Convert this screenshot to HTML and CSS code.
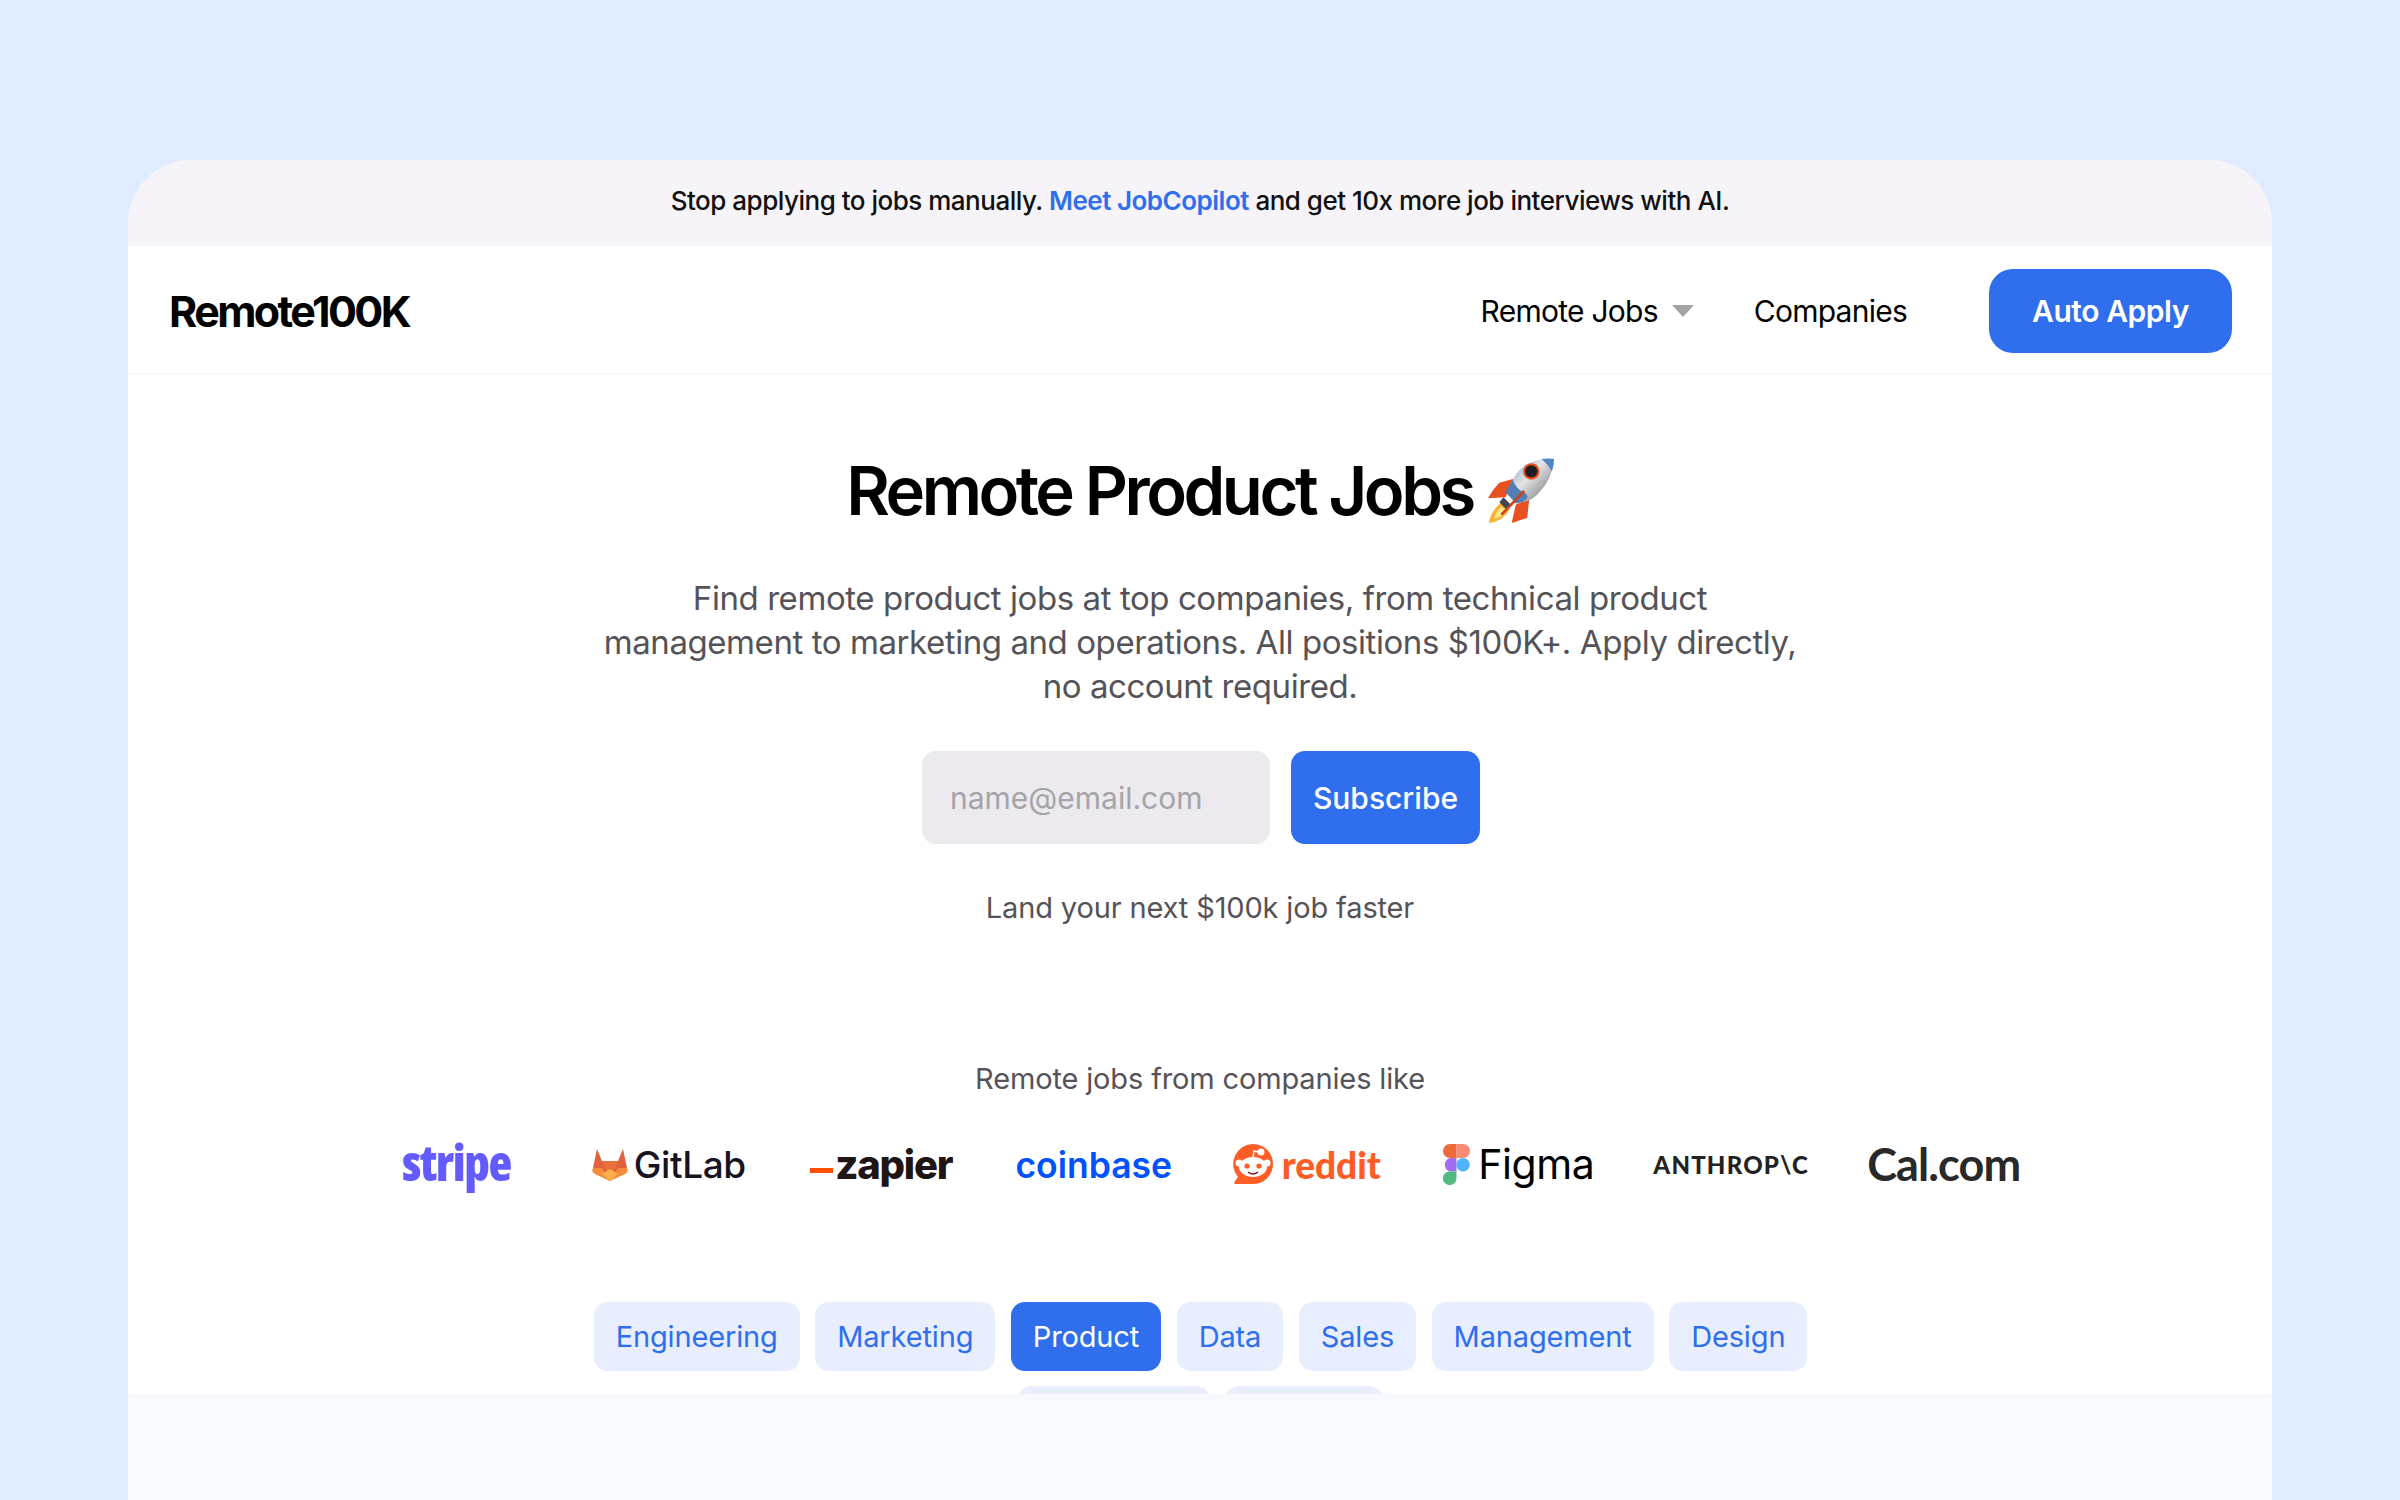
FILE: index.html
```html
<!DOCTYPE html>
<html lang="en">
<head>
    <meta charset="UTF-8">
    <title>Remote Product Jobs</title>
    <link rel="stylesheet" href="styles.css">
</head>
<body>
    <div class="card">
        <div class="banner">Stop applying to jobs manually. <a href="#">Meet JobCopilot</a> and get 10x more job interviews with AI.</div>

        <nav class="nav">
            <a class="brand" href="#">Remote100K</a>
            <div class="nav-links">
                <a class="nav-link" href="#">Remote Jobs <span class="caret"></span></a>
                <a class="nav-link" href="#">Companies</a>
                <a class="auto-apply" href="#">Auto Apply</a>
            </div>
        </nav>

        <main class="hero">
            <h1>Remote Product Jobs
                <svg class="rocket" viewBox="0 0 64 64" aria-hidden="true">
                    <defs>
                        <linearGradient id="hull" x1="0" y1="0" x2="1" y2="1">
                            <stop offset="0" stop-color="#7fa6cf"/>
                            <stop offset="0.4" stop-color="#e4e4e4"/>
                            <stop offset="0.75" stop-color="#9a9b9e"/>
                            <stop offset="1" stop-color="#6f7175"/>
                        </linearGradient>
                    </defs>
                    <path d="M25 20 L11 24 Q4 31 0 39 L17 38Z" fill="#e9501f"/>
                    <path d="M40 40 L38 58 L23 63 L27 45Z" fill="#e9501f"/>
                    <path d="M14 42 Q2 52 1 63 Q14 62 21 50Z" fill="#f9b233"/>
                    <path d="M13 47 Q7 53 6 59 Q13 58 18 51Z" fill="#fde68a"/>
                    <path d="M15 38 L22 45 L18 50 L11 43Z" fill="#3f4654"/>
                    <path d="M64 1 Q48 -1 35 8 Q28 13 24 21 L33 43 Q44 41 50 33 Q63 19 64 1Z" fill="url(#hull)"/>
                    <path d="M64 1 Q58 0 52 1 Q58 6 62 13 Q64 7 64 1Z" fill="#4f86c6"/>
                    <path d="M24 21 L17 33 L27 44 L33 43 Q42 38 36 34 Q27 30 24 21Z" fill="#4f7fb4"/>
                    <path d="M35 32 L13 55" stroke="#c8431c" stroke-width="2.500" fill="none"/>
                    <circle cx="42" cy="13" r="8" fill="#e9501f"/>
                    <circle cx="42" cy="13" r="6" fill="#1d1d22"/>
                </svg>
            </h1>
            <p class="lead">Find remote product jobs at top companies, from technical product management to marketing and operations. All positions $100K+. Apply directly, no account required.</p>

            <form class="subscribe">
                <input type="email" placeholder="name@email.com">
                <button type="button">Subscribe</button>
            </form>
            <p class="tagline">Land your next $100k job faster</p>

            <p class="logos-title">Remote jobs from companies like</p>
            <div class="logos">
                <div class="logo"><span class="stripe">stripe</span></div>
                <div class="logo">
                    <svg class="mark-gitlab" viewBox="0 0 36 33" aria-hidden="true">
                        <path d="M18 33 L1 20 L5 1 L10 13 H26 L31 1 L35 20Z" fill="#e2603a"/>
                        <path d="M18 33 L10 13 H26Z" fill="#e8703a"/>
                        <path d="M1 20 Q-1 24 3 26 L18 33 L10 20Z" fill="#f58a3c"/>
                        <path d="M35 20 Q37 24 33 26 L18 33 L26 20Z" fill="#f58a3c"/>
                        <path d="M18 33 L10 26 L18 21 L26 26Z" fill="#fbb04a"/>
                    </svg>
                    <span class="gitlab">GitLab</span>
                </div>
                <div class="logo"><span class="zapier-bar"></span><span class="zapier">zapier</span></div>
                <div class="logo"><span class="coinbase">coinbase</span></div>
                <div class="logo">
                    <svg class="mark-reddit" viewBox="0 0 42 42" aria-hidden="true">
                        <path d="M21 1 A20 20 0 1 1 21 41 H4 Q1 41 3 38 L6 34 A20 20 0 0 1 21 1Z" fill="#ff5c26"/>
                        <ellipse cx="21" cy="24" rx="14" ry="10" fill="#fff"/>
                        <circle cx="7" cy="20" r="3.5" fill="#fff"/>
                        <circle cx="35" cy="20" r="3.5" fill="#fff"/>
                        <circle cx="29" cy="9" r="3.5" fill="#fff"/>
                        <path d="M21 15 L22 8 L27 9" fill="none" stroke="#fff" stroke-width="1.5"/>
                        <circle cx="15" cy="23" r="2.6" fill="#ff5c26"/>
                        <circle cx="27" cy="23" r="2.6" fill="#ff5c26"/>
                        <path d="M16 29 Q21 33 26 29" fill="none" stroke="#842123" stroke-width="1.6"/>
                    </svg>
                    <span class="reddit">reddit</span>
                </div>
                <div class="logo">
                    <svg class="mark-figma" viewBox="0 0 27 41" aria-hidden="true">
                        <path d="M13.5 0 H7 A7 7 0 0 0 7 14 H13.5Z" fill="#ee6a3a"/>
                        <path d="M13.5 0 H20 A7 7 0 0 1 20 14 H13.5Z" fill="#fb8a72"/>
                        <path d="M13.5 14 H7 A7 7 0 0 0 7 27.500 H13.5Z" fill="#a46cf5"/>
                        <circle cx="20" cy="20.700" r="6.800" fill="#4fb4fb"/>
                        <path d="M7 27.500 H13.500 V34 A6.800 6.800 0 1 1 7 27.500Z" fill="#4fbb83"/>
                    </svg>
                    <span class="figma">Figma</span>
                </div>
                <div class="logo"><span class="anthropic">ANTHROP\C</span></div>
                <div class="logo"><span class="calcom">Cal.com</span></div>
            </div>

            <div class="tags">
                <a class="tag" href="#">Engineering</a>
                <a class="tag" href="#">Marketing</a>
                <a class="tag active" href="#">Product</a>
                <a class="tag" href="#">Data</a>
                <a class="tag" href="#">Sales</a>
                <a class="tag" href="#">Management</a>
                <a class="tag" href="#">Design</a>
                <span class="tag tag-long"></span>
                <span class="tag tag-short"></span>
            </div>
        </main>

        <div class="lower"></div>
    </div>
</body>
</html>
```

FILE: styles.css
```css
* {
    box-sizing: border-box;
}
html, body {
    height: 100%;
}
body {
    margin: 0;
    padding: 160px 128px 0;
    background-color: #dfebff;
    font-family: Inter, "Liberation Sans", sans-serif;
    color: #000;
    overflow: hidden;
}
a {
    text-decoration: none;
    color: inherit;
}
.card {
    height: 1340px;
    background-color: #fff;
    border-radius: 64px 64px 0 0;
    overflow: hidden;
    display: flex;
    flex-direction: column;
}
.banner {
    height: 86px;
    padding-bottom: 6px;
    display: flex;
    align-items: center;
    justify-content: center;
    white-space: pre-wrap;
    background-color: #f6f4f8;
    font-size: 26px;
    font-weight: 500;
    letter-spacing: -0.019em;
    color: #111;
}
.banner a {
    color: #2f6fed;
    font-weight: 600;
}
.nav {
    height: 129px;
    padding: 2px 40px 0 41px;
    display: flex;
    align-items: center;
    justify-content: space-between;
    border-bottom: 2px solid #f6f5f8;
}
.brand {
    font-size: 43px;
    font-weight: 700;
    letter-spacing: -0.06em;
}
.nav-links {
    display: flex;
    align-items: center;
}
.nav-link {
    font-size: 30px;
    font-weight: 400;
    letter-spacing: -0.025em;
    display: flex;
    align-items: center;
    gap: 14px;
    margin-right: 60px;
}
.nav-link + .nav-link {
    margin-right: 82px;
}
.caret {
    width: 0;
    height: 0;
    border-left: 11px solid transparent;
    border-right: 11px solid transparent;
    border-top: 12px solid #a3a3a3;
}
.auto-apply {
    width: 243px;
    height: 84px;
    display: flex;
    align-items: center;
    justify-content: center;
    background-color: #2f6fed;
    color: #fff;
    border-radius: 24px;
    font-size: 30px;
    font-weight: 600;
    letter-spacing: -0.015em;
}
.hero {
    height: 1019px;
    flex: none;
    overflow: hidden;
    padding-top: 66px;
    text-align: center;
}
h1 {
    margin: 0;
    height: 100px;
    font-size: 67px;
    line-height: 100px;
    font-weight: 600;
    letter-spacing: -0.052em;
    display: flex;
    justify-content: center;
    align-items: center;
    gap: 15px;
}
.rocket {
    width: 66px;
    height: 66px;
}
.lead {
    width: 1200px;
    margin: 35px auto 0;
    font-size: 33px;
    line-height: 44px;
    letter-spacing: -0.013em;
    color: #555358;
}
.subscribe {
    display: flex;
    justify-content: center;
    gap: 21px;
    margin: 43px 0 0 2px;
}
.subscribe input {
    width: 348px;
    height: 93px;
    padding: 0 28px;
    border: none;
    border-radius: 14px;
    background-color: #eceaee;
    font-family: inherit;
    font-size: 30px;
}
.subscribe input::placeholder {
    color: #a5a3a8;
}
.subscribe button {
    width: 189px;
    height: 93px;
    border: none;
    border-radius: 14px;
    background-color: #2f6fed;
    color: #fff;
    font-family: inherit;
    font-size: 30px;
    font-weight: 500;
}
.tagline {
    margin: 46px 0 0;
    font-size: 29px;
    line-height: 36px;
    letter-spacing: -0.005em;
    color: #555358;
}
.logos-title {
    margin: 135px 0 0;
    font-size: 29px;
    line-height: 36px;
    letter-spacing: -0.005em;
    color: #555358;
}
.logos {
    width: 1700px;
    height: 70px;
    margin: 32px auto 0;
    display: grid;
    grid-template-columns: repeat(8, 1fr);
}
.logo {
    display: flex;
    align-items: center;
    justify-content: center;
}
.stripe {
    padding-bottom: 4px;
    font-family: "Open Sans", sans-serif;
    font-size: 49px;
    font-weight: 800;
    font-stretch: 75%;
    letter-spacing: -0.03em;
    color: #635bff;
}
.mark-gitlab {
    width: 36px;
    height: 33px;
    margin-right: 6px;
}
.gitlab {
    font-size: 37px;
    font-weight: 500;
    letter-spacing: -0.01em;
    color: #171321;
}
.zapier-bar {
    width: 23px;
    height: 5px;
    margin: 12px 2px 0 0;
    background-color: #ff4f00;
}
.zapier {
    font-size: 40px;
    font-weight: 800;
    letter-spacing: -0.03em;
    color: #201515;
}
.coinbase {
    padding-top: 2px;
    font-size: 35.500px;
    font-weight: 600;
    color: #0052ff;
}
.mark-reddit {
    width: 42px;
    height: 42px;
    margin-right: 8px;
}
.reddit {
    font-family: Lato, sans-serif;
    font-size: 37px;
    font-weight: 900;
    color: #ff5c26;
}
.mark-figma {
    width: 27px;
    height: 41px;
    margin-right: 8px;
}
.figma {
    font-size: 41px;
    font-weight: 400;
    letter-spacing: -0.01em;
    color: #000;
}
.anthropic {
    font-family: Lato, sans-serif;
    font-size: 24px;
    font-weight: 900;
    letter-spacing: 0.05em;
    color: #222;
}
.calcom {
    font-family: Lato, sans-serif;
    font-size: 45px;
    font-weight: 700;
    letter-spacing: -0.02em;
    color: #292929;
}
.tags {
    width: 1300px;
    margin: 103px auto 0;
    padding-left: 1px;
    display: flex;
    flex-wrap: wrap;
    justify-content: center;
    gap: 15px 15.500px;
}
.tag {
    height: 69px;
    padding: 0 22px;
    display: flex;
    align-items: center;
    background-color: #e8eefd;
    color: #2f6fed;
    border-radius: 14px;
    font-size: 29px;
    letter-spacing: -0.005em;
}
.tag.active {
    background-color: #2f6fed;
    color: #fff;
}
.tag-long {
    width: 192px;
}
.tag-short {
    width: 158px;
}
.lower {
    flex: 1;
    background-color: #f8f9ff;
}
```
